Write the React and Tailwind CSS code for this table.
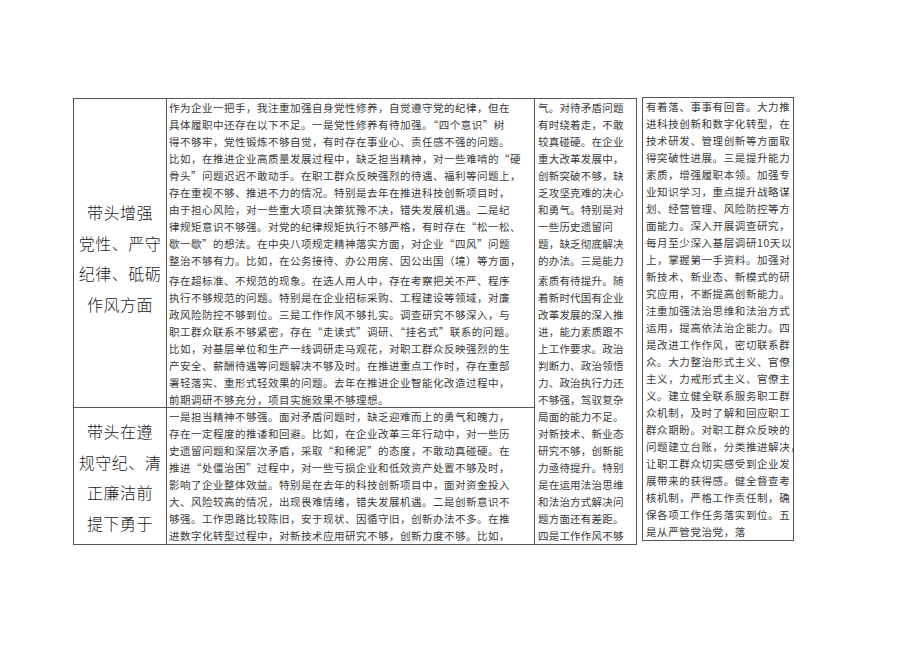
import React from 'react';

const font = { fontFamily: '"Noto Sans CJK SC", "Noto Sans", sans-serif' };

const row1Text = [
  '作为企业一把手，我注重加强自身党性修养，自觉遵守党的纪律，但在',
  '具体履职中还存在以下不足。一是党性修养有待加强。“四个意识”树',
  '得不够牢，党性锻炼不够自觉，有时存在事业心、责任感不强的问题。',
  '比如，在推进企业高质量发展过程中，缺乏担当精神，对一些难啃的“硬',
  '骨头”问题迟迟不敢动手。在职工群众反映强烈的待遇、福利等问题上，',
  '存在重视不够、推进不力的情况。特别是去年在推进科技创新项目时，',
  '由于担心风险，对一些重大项目决策犹豫不决，错失发展机遇。二是纪',
  '律规矩意识不够强。对党的纪律规矩执行不够严格，有时存在“松一松、',
  '歇一歇”的想法。在中央八项规定精神落实方面，对企业“四风”问题',
  '整治不够有力。比如，在公务接待、办公用房、因公出国（境）等方面，',
  '存在超标准、不规范的现象。在选人用人中，存在考察把关不严、程序',
  '执行不够规范的问题。特别是在企业招标采购、工程建设等领域，对廉',
  '政风险防控不够到位。三是工作作风不够扎实。调查研究不够深入，与',
  '职工群众联系不够紧密，存在“走读式”调研、“挂名式”联系的问题。',
  '比如，对基层单位和生产一线调研走马观花，对职工群众反映强烈的生',
  '产安全、薪酬待遇等问题解决不够及时。在推进重点工作时，存在重部',
  '署轻落实、重形式轻效果的问题。去年在推进企业智能化改造过程中，',
  '前期调研不够充分，项目实施效果不够理想。',
];

const row2Text = [
  '一是担当精神不够强。面对矛盾问题时，缺乏迎难而上的勇气和魄力，',
  '存在一定程度的推诿和回避。比如，在企业改革三年行动中，对一些历',
  '史遗留问题和深层次矛盾，采取“和稀泥”的态度，不敢动真碰硬。在',
  '推进“处僵治困”过程中，对一些亏损企业和低效资产处置不够及时，',
  '影响了企业整体效益。特别是在去年的科技创新项目中，面对资金投入',
  '大、风险较高的情况，出现畏难情绪，错失发展机遇。二是创新意识不',
  '够强。工作思路比较陈旧，安于现状、因循守旧，创新办法不多。在推',
  '进数字化转型过程中，对新技术应用研究不够，创新力度不够。比如，',
];

const col3Text = [
  '气。对待矛盾问题',
  '有时绕着走，不敢',
  '较真碰硬。在企业',
  '重大改革发展中，',
  '创新突破不够，缺',
  '乏攻坚克难的决心',
  '和勇气。特别是对',
  '一些历史遗留问',
  '题，缺乏彻底解决',
  '的办法。三是能力',
  '素质有待提升。随',
  '着新时代国有企业',
  '改革发展的深入推',
  '进，能力素质跟不',
  '上工作要求。政治',
  '判断力、政治领悟',
  '力、政治执行力还',
  '不够强，驾驭复杂',
  '局面的能力不足。',
  '对新技术、新业态',
  '研究不够，创新能',
  '力亟待提升。特别',
  '是在运用法治思维',
  '和法治方式解决问',
  '题方面还有差距。',
  '四是工作作风不够',
];

const col4Text = [
  '有着落、事事有回音。大力推',
  '进科技创新和数字化转型，在',
  '技术研发、管理创新等方面取',
  '得突破性进展。三是提升能力',
  '素质，增强履职本领。加强专',
  '业知识学习，重点提升战略谋',
  '划、经营管理、风险防控等方',
  '面能力。深入开展调查研究，',
  '每月至少深入基层调研10天以',
  '上，掌握第一手资料。加强对',
  '新技术、新业态、新模式的研',
  '究应用，不断提高创新能力。',
  '注重加强法治思维和法治方式',
  '运用，提高依法治企能力。四',
  '是改进工作作风，密切联系群',
  '众。大力整治形式主义、官僚',
  '主义，力戒形式主义、官僚主',
  '义。建立健全联系服务职工群',
  '众机制，及时了解和回应职工',
  '群众期盼。对职工群众反映的',
  '问题建立台账，分类推进解决，',
  '让职工群众切实感受到企业发',
  '展带来的获得感。健全督查考',
  '核机制，严格工作责任制，确',
  '保各项工作任务落实到位。五',
  '是从严管党治党，落',
];

// one div per printed line so the breaks match the page
const Lines = ({ lines, gapAfter, tracking = 'tracking-[0.5px]' }) => (
  <div className={`text-[10.5px] text-[#3a3a3a] ${tracking}`} style={font}>
    {lines.map((l, i) => (
      <div
        key={i}
        className={`h-[17px] leading-[17px] whitespace-nowrap ${gapAfter === i ? 'mb-[3px]' : ''}`}
      >
        {l}
      </div>
    ))}
  </div>
);

const Heading = ({ lines }) => (
  <div className="flex flex-col items-center text-[16px] font-light text-[#1a1a1a] tracking-[0.5px]" style={font}>
    {lines.map((l, i) => (
      <div key={i} className="h-[30.5px] leading-[30.5px] whitespace-nowrap">
        {l}
      </div>
    ))}
  </div>
);

export default function App() {
  return (
    <div className="w-[920px] h-[651px] bg-white overflow-hidden">
      <div className="flex items-start pl-[73px] pt-[98px]">
        <div className="flex w-[564px] h-[447px] border border-[#555]">
          <div className="flex flex-col w-[460px]">
            <div className="flex h-[309px] border-b border-[#555]">
              <div className="w-[93px] border-r border-[#555] flex items-center justify-center pt-[10px]">
                <Heading lines={['带头增强', '党性、严守', '纪律、砥砺', '作风方面']} />
              </div>
              <div className="flex-1 pl-[2px]">
                <Lines lines={row1Text} gapAfter={9} />
              </div>
            </div>
            <div className="flex flex-1">
              <div className="w-[93px] border-r border-[#555] flex items-center justify-center pt-[2px]">
                <Heading lines={['带头在遵', '规守纪、清', '正廉洁前', '提下勇于']} />
              </div>
              <div className="flex-1 pl-[2px]">
                <Lines lines={row2Text} />
              </div>
            </div>
          </div>
          <div className="flex-1 border-l border-[#555] pl-[3px]">
            <Lines lines={col3Text} gapAfter={9} tracking="tracking-[0.2px]" />
          </div>
        </div>
        <div className="ml-[5px] -mt-[1px] w-[152px] h-[444px] border border-[#555] pl-[3px]">
          <Lines lines={col4Text} tracking="tracking-[0.6px]" />
        </div>
      </div>
    </div>
  );
}
